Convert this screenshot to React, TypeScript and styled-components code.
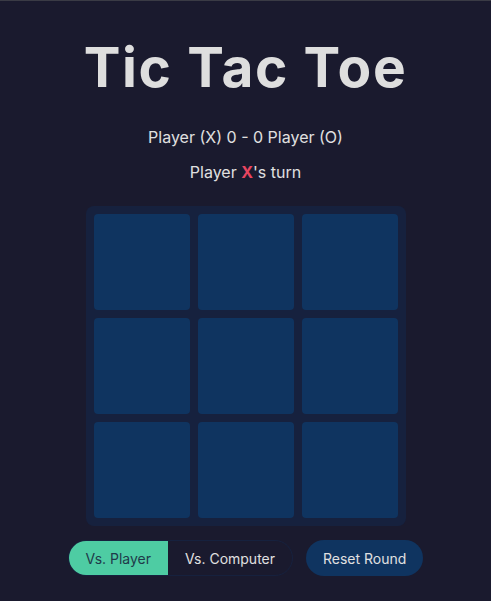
import React, { useState } from 'react';
import styled, { createGlobalStyle } from 'styled-components';

const GlobalStyle = createGlobalStyle`
  html, body {
    margin: 0;
    padding: 0;
    background: #1a1a2e;
  }
  body {
    font-family: Inter, "Noto Sans", sans-serif;
    color: #e0e0e0;
    border-top: 1px solid #3a3b45;
  }
`;

const Page = styled.main`
  display: flex;
  flex-direction: column;
  align-items: center;
  min-height: 600px;
`;

const Title = styled.h1`
  margin: 33px 0 0;
  font-size: 55px;
  line-height: 66px;
  font-weight: 700;
  letter-spacing: 1.6px;
  color: #dedede;
`;

const Score = styled.p`
  margin: 25px 0 0;
  font-size: 16px;
  line-height: 24px;
`;

const Turn = styled.p`
  margin: 11px 0 0;
  font-size: 16px;
  line-height: 24px;
`;

const Mark = styled.span<{ $player: 'X' | 'O' }>`
  font-weight: 700;
  color: ${({ $player }) => ($player === 'X' ? '#e94560' : '#4ecca3')};
`;

const Board = styled.div`
  margin-top: 22px;
  display: grid;
  grid-template-columns: repeat(3, 96px);
  grid-auto-rows: 96px;
  gap: 8px;
  padding: 8px;
  background: #16213e;
  border-radius: 8px;
`;

const Cell = styled.button`
  border: none;
  border-radius: 4px;
  background: #0f3460;
  cursor: pointer;
  padding: 0;
`;

const Controls = styled.div`
  margin-top: 14px;
  display: flex;
  gap: 13px;
`;

const Toggle = styled.div`
  display: flex;
  height: 36px;
  border: 1px solid #16213e;
  border-radius: 18px;
  overflow: hidden;
  box-sizing: border-box;
`;

const ToggleButton = styled.button<{ $active: boolean }>`
  border: none;
  padding: 0 17px;
  font-family: inherit;
  font-size: 14px;
  background: ${({ $active }) => ($active ? '#4ecca3' : 'transparent')};
  color: ${({ $active }) => ($active ? '#1f3a4a' : '#e0e0e0')};
  cursor: pointer;
`;

const ResetButton = styled.button`
  height: 36px;
  border: none;
  border-radius: 18px;
  padding: 0 17px;
  font-family: inherit;
  font-size: 14px;
  background: #0f3460;
  color: #e0e0e0;
  cursor: pointer;
`;

export default function App() {
  const [mode, setMode] = useState<'player' | 'computer'>('player');
  const cells = Array.from({ length: 9 });

  return (
    <>
      <GlobalStyle />
      <Page>
        <Title>Tic Tac Toe</Title>
        <Score>Player (X) 0 - 0 Player (O)</Score>
        <Turn>
          Player <Mark $player="X">X</Mark>'s turn
        </Turn>
        <Board>
          {cells.map((_, i) => (
            <Cell key={i} aria-label={`cell ${i + 1}`} />
          ))}
        </Board>
        <Controls>
          <Toggle>
            <ToggleButton $active={mode === 'player'} onClick={() => setMode('player')}>
              Vs. Player
            </ToggleButton>
            <ToggleButton $active={mode === 'computer'} onClick={() => setMode('computer')}>
              Vs. Computer
            </ToggleButton>
          </Toggle>
          <ResetButton>Reset Round</ResetButton>
        </Controls>
      </Page>
    </>
  );
}
